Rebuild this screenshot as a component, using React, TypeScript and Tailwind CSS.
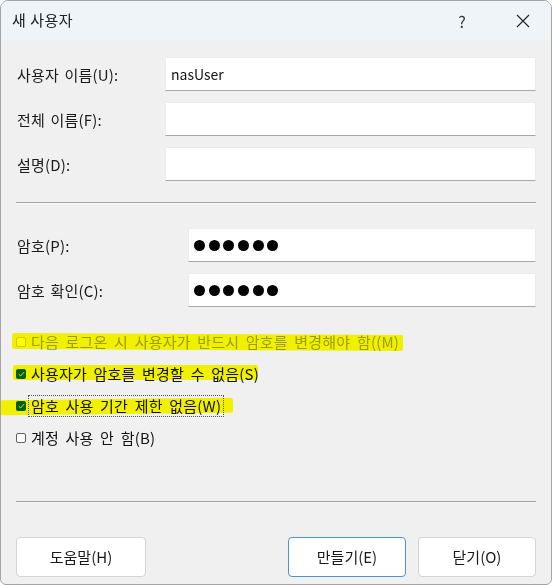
import React from "react";

const font = { fontFamily: '"Noto Sans CJK KR", "Noto Sans", sans-serif' };

export default function App() {
  return (
    <div className="w-[552px] h-[585px] bg-white" style={font}>
      <div className="h-full rounded-t-lg rounded-b-md border border-[#a4a4a4] bg-[#f0f0f0] overflow-hidden flex flex-col text-[14px] text-[#1a1a1a]">
        {/* TITLE BAR */}
        <div className="h-[39px] shrink-0 bg-[#eff4f9] flex items-center pl-[11px] pr-[5px]">
          <span className="text-[15px] text-[#202020] tracking-[0.5px]">새 사용자</span>
          <div className="ml-auto flex items-center gap-[15px]">
            <span className="w-[46px] text-center text-[16px] text-[#333]">?</span>
            <span className="w-[46px] flex justify-center">
              <svg width="14" height="14" viewBox="0 0 14 14">
                <path d="M1 1 L13 13 M13 1 L1 13" stroke="#222" strokeWidth="1.1" />
              </svg>
            </span>
          </div>
        </div>

        <div className="flex flex-col px-[15px] pt-[17px]">
          {/* NAME FIELDS */}
          <div className="flex flex-col gap-[11px]">
            <Field label="사용자 이름(U):" labelW="w-[149px]" value="nasUser" />
            <Field label="전체 이름(F):" labelW="w-[149px]" />
            <Field label="설명(D):" labelW="w-[149px]" />
          </div>

          <Separator className="mt-[21px]" />

          {/* PASSWORDS */}
          <div className="flex flex-col gap-[11px] mt-[24px]">
            <Field label="암호(P):" labelW="w-[172px]" dots />
            <Field label="암호 확인(C):" labelW="w-[172px]" dots />
          </div>

          {/* OPTIONS */}
          <div className="relative mt-[19px] flex flex-col">
            <CheckRow label="다음 로그온 시 사용자가 반드시 암호를 변경해야 함((M)" disabled />
            <CheckRow label="사용자가 암호를 변경할 수 없음(S)" checked />
            <CheckRow label="암호 사용 기간 제한 없음(W)" checked focused />
            <CheckRow label="계정 사용 안 함(B)" />

            {/* highlighter marks */}
            <div className="absolute left-[-4px] top-[8px] w-[391px] h-[16px] bg-[#ffff00] mix-blend-multiply rotate-[0.3deg] rounded-[2px]" />
            <div className="absolute left-[-3px] top-[39px] w-[245px] h-[15px] bg-[#ffff00] mix-blend-multiply rounded-[2px]" />
            <div className="absolute left-[-16px] top-[73px] w-[233px] h-[15px] bg-[#ffff00] mix-blend-multiply -rotate-[0.6deg] rounded-[3px]" />
          </div>

          <Separator className="mt-[47px]" />

          {/* BUTTONS */}
          <div className="flex mt-[34px] gap-[12px]">
            <Button label="도움말(H)" w="w-[130px]" />
            <div className="flex-1" />
            <Button label="만들기(E)" w="w-[118px]" primary />
            <Button label="닫기(O)" w="w-[118px]" />
          </div>
        </div>
      </div>
    </div>
  );
}

function Field({ label, labelW, value, dots }: { label: string; labelW: string; value?: string; dots?: boolean }) {
  return (
    <div className="flex items-center h-[34px]">
      <div className={`${labelW} shrink-0 pl-[1px] pt-[2px] text-[15px] tracking-[0.2px] [word-spacing:2px]`}>{label}</div>
      <div className="flex-1 h-full bg-white border border-[#ececec] border-b-[#a8a8a8] flex items-center px-[5px]">
        {value && <span className="text-[#111]">{value}</span>}
        {dots && (
          <div className="flex gap-[3.7px]">
            {[0, 1, 2, 3, 4, 5].map((i) => (
              <span key={i} className="w-[11px] h-[11px] rounded-full bg-black" />
            ))}
          </div>
        )}
      </div>
    </div>
  );
}

function Separator({ className }: { className: string }) {
  return (
    <div className={className}>
      <div className="h-px bg-[#a0a0a0]" />
      <div className="h-px bg-white/70" />
    </div>
  );
}

function CheckRow({ label, checked, disabled, focused }: { label: string; checked?: boolean; disabled?: boolean; focused?: boolean }) {
  return (
    <div className="h-[32px] flex items-center">
      {checked ? (
        <span className="w-[10px] h-[10px] rounded-[2px] bg-[#005fb8] flex items-center justify-center shrink-0">
          <svg width="7" height="6" viewBox="0 0 7 6">
            <path d="M0.8 3.2 L2.7 5 L6.2 1" stroke="#dfe8c0" strokeWidth="1" fill="none" />
          </svg>
        </span>
      ) : (
        <span
          className={`w-[10px] h-[10px] rounded-[2px] bg-white border shrink-0 ${disabled ? "border-[#c8c8c8]" : "border-[#606060]"}`}
        />
      )}
      <span
        className={`ml-[3px] px-[2px] leading-[20px] text-[15px] tracking-[0.2px] [word-spacing:3px] ${disabled ? "text-[#9c9c9c]" : "text-[#111]"} ${
          focused ? "outline outline-1 outline-dotted outline-[#555]" : ""
        }`}
      >
        {label}
      </span>
    </div>
  );
}

function Button({ label, w, primary }: { label: string; w: string; primary?: boolean }) {
  return (
    <div
      className={`${w} h-[40px] rounded-[4px] bg-white flex items-center justify-center border text-[15px] ${
        primary ? "border-[#4a93d8]" : "border-[#d4d4d4]"
      } text-[#1a1a1a]`}
    >
      {label}
    </div>
  );
}
